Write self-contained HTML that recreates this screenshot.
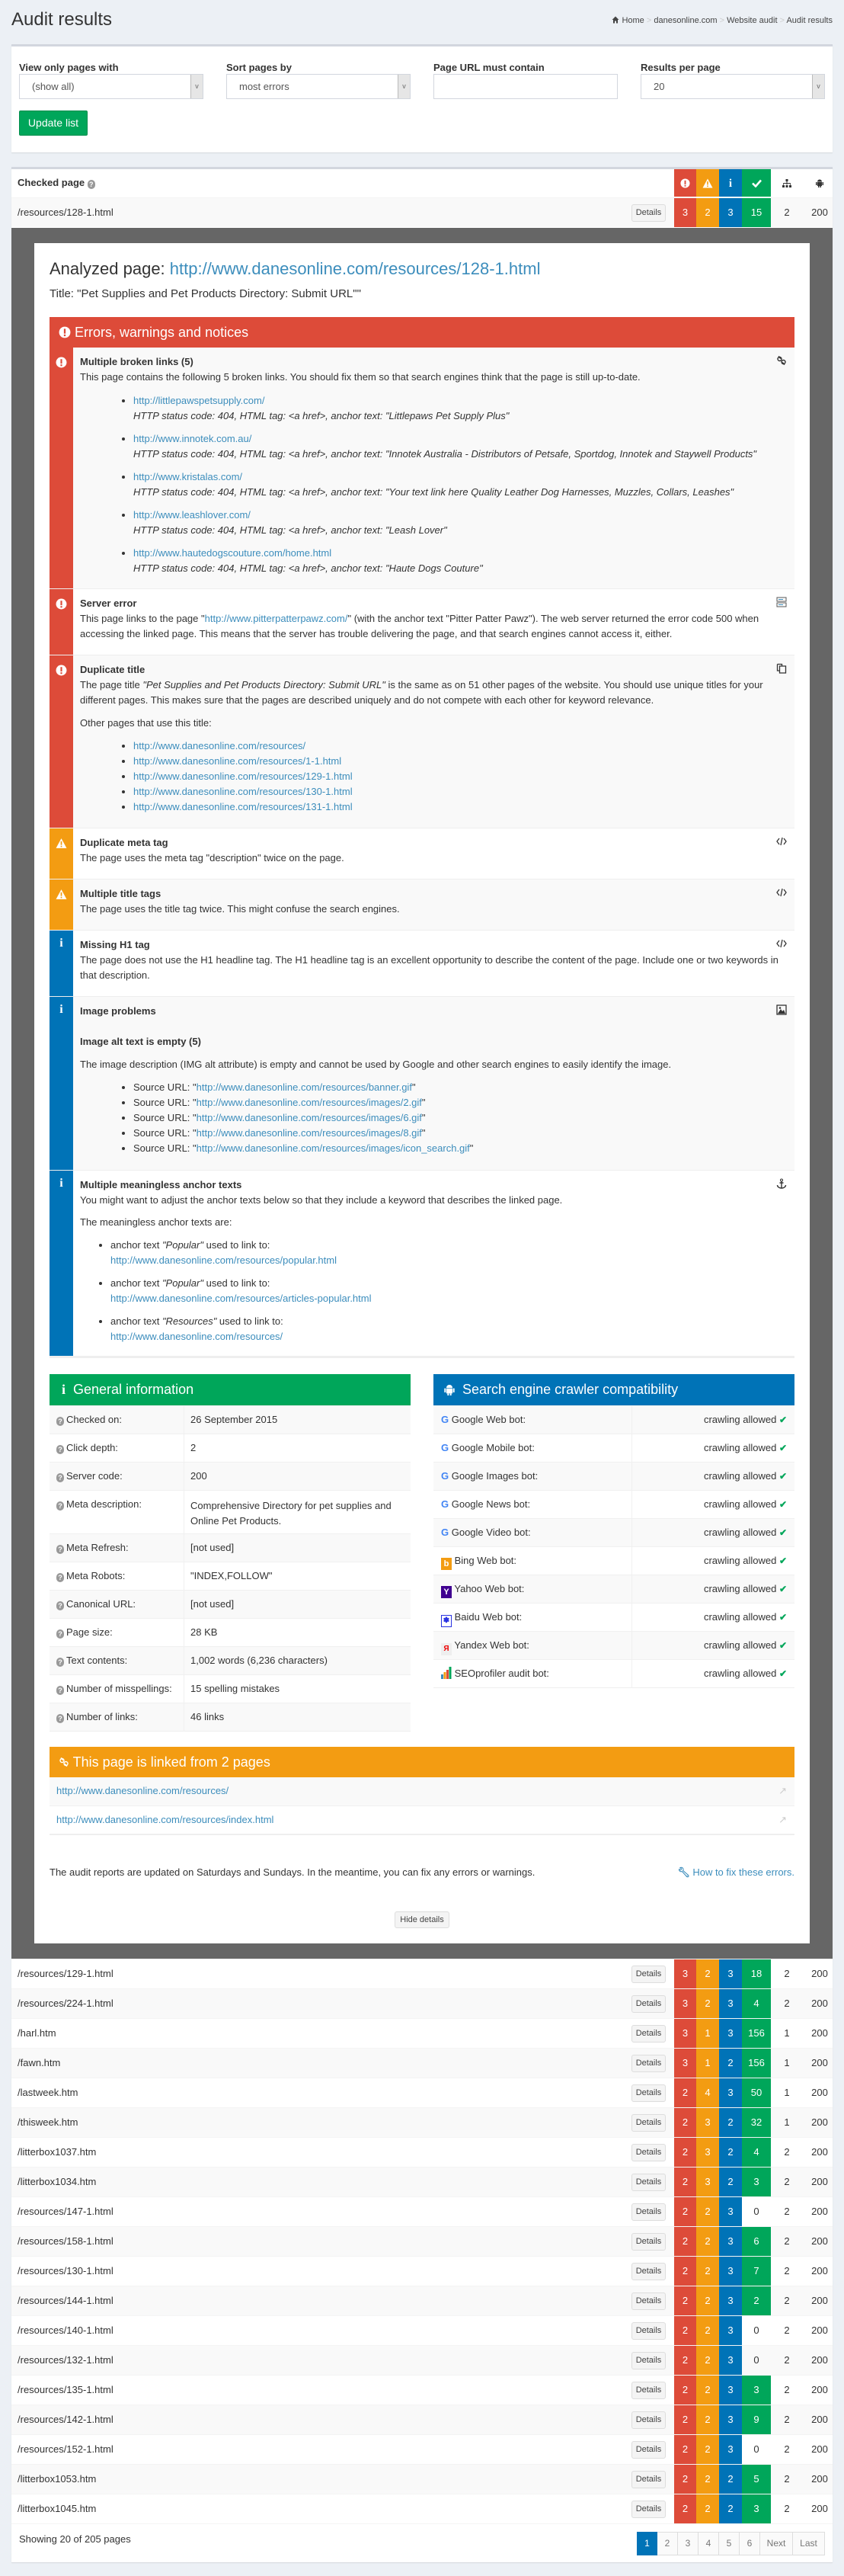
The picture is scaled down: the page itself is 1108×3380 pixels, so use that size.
<!DOCTYPE html>
<html><head><meta charset="utf-8">
<style>
*{box-sizing:border-box;margin:0;padding:0}
body{width:1108px;height:3380px;background:#ecf0f5;font-family:"Liberation Sans",sans-serif;font-size:13px;color:#333;position:relative;overflow:hidden}
a{color:#3c8dbc;text-decoration:none}
.abs{position:absolute}
.panel{position:absolute;left:15px;width:1078px;background:#fff;border-top:3px solid #d2d6de;box-shadow:0 1px 1px rgba(0,0,0,.1)}
.lbl{position:absolute;top:20px;font-weight:bold;font-size:13px}
.sel{position:absolute;top:36px;height:33px;width:242px;border:1px solid #d2d6de;background:#fff;padding:0 16px;line-height:31px;font-size:13px;color:#555}
.sel .ar{position:absolute;right:0;top:0;width:16px;height:31px;background:#e6e6e6;border-left:1px solid #bbb;font-size:9px;text-align:center;color:#666}
.btn{position:absolute;left:10px;top:84px;width:90px;height:33px;background:#00a65a;border:1px solid #008d4c;color:#fff;font-size:14px;line-height:31px;text-align:center;border-radius:2px}
.row{position:absolute;left:0;width:1078px;height:39px;border-top:1px solid #f4f4f4}
.row .p{position:absolute;left:8px;top:0;line-height:38px;font-size:13px}
.det{position:absolute;left:814px;top:8px;width:45px;height:23px;border:1px solid #ddd;background:#f4f4f4;border-radius:3px;font-size:11px;line-height:21px;text-align:center;color:#444}
.c{position:absolute;top:0;height:38px;line-height:38px;text-align:center;color:#fff;font-size:13px}
.c1{left:870px;width:29px;background:#dd4b39}
.c2{left:899px;width:30px;background:#f39c12}
.c3{left:929px;width:30px;background:#0073b7}
.c4{left:959px;width:38px;background:#00a65a}
.c4.z{background:transparent;color:#333}
.c5{left:1006px;width:24px;color:#333}
.c6{left:1046px;width:30px;color:#333}
.g{background:#f9f9f9}
.blk{position:relative;border-bottom:1px solid #eee;overflow:hidden}
.blk .st{position:absolute;left:0;top:0;bottom:0;width:31px}
.blk .ic{position:absolute;left:8px;top:12px;width:15px;height:15px}
.blk .ri{position:absolute;right:10px;top:10px;width:14px;height:14px}
.blk .ct{margin-left:40px;padding-top:9px;padding-right:14px;line-height:20px}
.blk h4{font-size:13px;font-weight:bold;line-height:20px}
.blk ul{list-style:disc;margin-left:70px}
.blk li{line-height:20px}
.blk li i{display:block}
.red{background:#dd4b39}.org{background:#f39c12}.blu{background:#0073b7}
.tb{position:absolute;border-bottom:1px solid #eee}
.tr{position:absolute;left:0;width:100%;height:37px;border-top:1px solid #f0f0f0;line-height:36px}
.q{display:inline-block;width:10px;height:12px;border-radius:5px;background:#999;color:#fff;font-size:9px;line-height:12px;text-align:center;font-weight:bold;vertical-align:-1px;margin-right:3px}
.pg{position:absolute;top:0;height:31px;border:1px solid #ddd;border-left:none;line-height:29px;text-align:center;color:#777;font-size:12px;background:#fafafa}
.ok{position:absolute;right:10px;line-height:37px;white-space:nowrap}
.ok span{color:#00a65a;font-weight:bold;font-size:12px}
</style></head><body>

<div class="abs" style="left:15px;top:12px;font-size:24px;color:#333">Audit results</div>
<div class="abs" style="right:15px;top:21px;font-size:11px;color:#444">
<svg width="10" height="10" viewBox="0 0 10 10" style="vertical-align:-1px"><path d="M5 0.5L0.5 5H2V9.5H4V6.5H6V9.5H8V5H9.5Z" fill="#444"/></svg>&nbsp;Home <span style="color:#ccc">&gt;</span> danesonline.com <span style="color:#ccc">&gt;</span> Website audit <span style="color:#ccc">&gt;</span> Audit results</div>

<div class="panel" style="top:58px;height:142px">
 <div class="lbl" style="left:10px">View only pages with</div>
 <div class="lbl" style="left:282px">Sort pages by</div>
 <div class="lbl" style="left:554px">Page URL must contain</div>
 <div class="lbl" style="left:826px">Results per page</div>
 <div class="sel" style="left:10px">(show all)<span class="ar">v</span></div>
 <div class="sel" style="left:282px">most errors<span class="ar">v</span></div>
 <div class="sel" style="left:554px"></div>
 <div class="sel" style="left:826px">20<span class="ar">v</span></div>
 <div class="btn">Update list</div>
</div>

<div class="panel" style="top:219px;height:3143px">
 <div class="abs" style="left:0;top:0;width:1078px;height:36px">
  <div class="abs" style="left:8px;top:0;line-height:36px;font-weight:bold">Checked page <span class="q">?</span></div>
  <div class="c c1" style="height:36px"><svg width="13" height="13" viewBox="0 0 14 14" style="vertical-align:-2px"><circle cx="7" cy="7" r="6.5" fill="#fff"/><rect x="6" y="3" width="2" height="5.5" fill="#dd4b39"/><rect x="6" y="9.5" width="2" height="2" fill="#dd4b39"/></svg></div>
  <div class="c c2" style="height:36px"><svg width="14" height="13" viewBox="0 0 14 13" style="vertical-align:-2px"><path d="M7 0.5L13.5 12.5H0.5Z" fill="#fff"/><rect x="6.2" y="4" width="1.6" height="4.5" fill="#f39c12"/><rect x="6.2" y="9.5" width="1.6" height="1.6" fill="#f39c12"/></svg></div>
  <div class="c c3" style="height:36px;font-weight:bold;font-family:'Liberation Serif',serif;font-size:15px">i</div>
  <div class="c c4" style="height:36px"><svg width="13" height="11" viewBox="0 0 13 11" style="vertical-align:-1px"><path d="M1 5.5L5 9.5L12 1.5" stroke="#fff" stroke-width="2.6" fill="none"/></svg></div>
  <div class="c c5" style="height:36px"><svg width="12" height="11" viewBox="0 0 12 11" style="vertical-align:-1px"><rect x="4.5" y="0" width="3" height="3" fill="#333"/><path d="M6 3V5M1.5 5.5V7.5M6 5.5V7.5M10.5 5.5V7.5M1.5 5.5H10.5" stroke="#333" stroke-width="1"/><rect x="0" y="8" width="3" height="3" fill="#333"/><rect x="4.5" y="8" width="3" height="3" fill="#333"/><rect x="9" y="8" width="3" height="3" fill="#333"/></svg></div>
  <div class="c c6" style="height:36px"><svg width="10" height="12" viewBox="0 0 10 12" style="vertical-align:-1px"><path d="M2 4.5A3 3 0 0 1 8 4.5Z" fill="#333"/><rect x="2" y="5" width="6" height="5" fill="#333"/><rect x="0" y="5" width="1.5" height="4" fill="#333"/><rect x="8.5" y="5" width="1.5" height="4" fill="#333"/><rect x="3" y="10" width="1.5" height="2" fill="#333"/><rect x="5.5" y="10" width="1.5" height="2" fill="#333"/></svg></div>
 </div>
 <div class="row g" style="top:37px"><div class="p">/resources/128-1.html</div><div class="det">Details</div><div class="c c1">3</div><div class="c c2">2</div><div class="c c3">3</div><div class="c c4">15</div><div class="c c5">2</div><div class="c c6">200</div></div>

 <div class="row" style="top:2348px"><div class="p">/resources/129-1.html</div><div class="det">Details</div><div class="c c1">3</div><div class="c c2">2</div><div class="c c3">3</div><div class="c c4">18</div><div class="c c5">2</div><div class="c c6">200</div></div>
 <div class="row g" style="top:2387px"><div class="p">/resources/224-1.html</div><div class="det">Details</div><div class="c c1">3</div><div class="c c2">2</div><div class="c c3">3</div><div class="c c4">4</div><div class="c c5">2</div><div class="c c6">200</div></div>
 <div class="row" style="top:2426px"><div class="p">/harl.htm</div><div class="det">Details</div><div class="c c1">3</div><div class="c c2">1</div><div class="c c3">3</div><div class="c c4">156</div><div class="c c5">1</div><div class="c c6">200</div></div>
 <div class="row g" style="top:2465px"><div class="p">/fawn.htm</div><div class="det">Details</div><div class="c c1">3</div><div class="c c2">1</div><div class="c c3">2</div><div class="c c4">156</div><div class="c c5">1</div><div class="c c6">200</div></div>
 <div class="row" style="top:2504px"><div class="p">/lastweek.htm</div><div class="det">Details</div><div class="c c1">2</div><div class="c c2">4</div><div class="c c3">3</div><div class="c c4">50</div><div class="c c5">1</div><div class="c c6">200</div></div>
 <div class="row g" style="top:2543px"><div class="p">/thisweek.htm</div><div class="det">Details</div><div class="c c1">2</div><div class="c c2">3</div><div class="c c3">2</div><div class="c c4">32</div><div class="c c5">1</div><div class="c c6">200</div></div>
 <div class="row" style="top:2582px"><div class="p">/litterbox1037.htm</div><div class="det">Details</div><div class="c c1">2</div><div class="c c2">3</div><div class="c c3">2</div><div class="c c4">4</div><div class="c c5">2</div><div class="c c6">200</div></div>
 <div class="row g" style="top:2621px"><div class="p">/litterbox1034.htm</div><div class="det">Details</div><div class="c c1">2</div><div class="c c2">3</div><div class="c c3">2</div><div class="c c4">3</div><div class="c c5">2</div><div class="c c6">200</div></div>
 <div class="row" style="top:2660px"><div class="p">/resources/147-1.html</div><div class="det">Details</div><div class="c c1">2</div><div class="c c2">2</div><div class="c c3">3</div><div class="c c4 z">0</div><div class="c c5">2</div><div class="c c6">200</div></div>
 <div class="row g" style="top:2699px"><div class="p">/resources/158-1.html</div><div class="det">Details</div><div class="c c1">2</div><div class="c c2">2</div><div class="c c3">3</div><div class="c c4">6</div><div class="c c5">2</div><div class="c c6">200</div></div>
 <div class="row" style="top:2738px"><div class="p">/resources/130-1.html</div><div class="det">Details</div><div class="c c1">2</div><div class="c c2">2</div><div class="c c3">3</div><div class="c c4">7</div><div class="c c5">2</div><div class="c c6">200</div></div>
 <div class="row g" style="top:2777px"><div class="p">/resources/144-1.html</div><div class="det">Details</div><div class="c c1">2</div><div class="c c2">2</div><div class="c c3">3</div><div class="c c4">2</div><div class="c c5">2</div><div class="c c6">200</div></div>
 <div class="row" style="top:2816px"><div class="p">/resources/140-1.html</div><div class="det">Details</div><div class="c c1">2</div><div class="c c2">2</div><div class="c c3">3</div><div class="c c4 z">0</div><div class="c c5">2</div><div class="c c6">200</div></div>
 <div class="row g" style="top:2855px"><div class="p">/resources/132-1.html</div><div class="det">Details</div><div class="c c1">2</div><div class="c c2">2</div><div class="c c3">3</div><div class="c c4 z">0</div><div class="c c5">2</div><div class="c c6">200</div></div>
 <div class="row" style="top:2894px"><div class="p">/resources/135-1.html</div><div class="det">Details</div><div class="c c1">2</div><div class="c c2">2</div><div class="c c3">3</div><div class="c c4">3</div><div class="c c5">2</div><div class="c c6">200</div></div>
 <div class="row g" style="top:2933px"><div class="p">/resources/142-1.html</div><div class="det">Details</div><div class="c c1">2</div><div class="c c2">2</div><div class="c c3">3</div><div class="c c4">9</div><div class="c c5">2</div><div class="c c6">200</div></div>
 <div class="row" style="top:2972px"><div class="p">/resources/152-1.html</div><div class="det">Details</div><div class="c c1">2</div><div class="c c2">2</div><div class="c c3">3</div><div class="c c4 z">0</div><div class="c c5">2</div><div class="c c6">200</div></div>
 <div class="row g" style="top:3011px"><div class="p">/litterbox1053.htm</div><div class="det">Details</div><div class="c c1">2</div><div class="c c2">2</div><div class="c c3">2</div><div class="c c4">5</div><div class="c c5">2</div><div class="c c6">200</div></div>
 <div class="row" style="top:3050px"><div class="p">/litterbox1045.htm</div><div class="det">Details</div><div class="c c1">2</div><div class="c c2">2</div><div class="c c3">2</div><div class="c c4">3</div><div class="c c5">2</div><div class="c c6">200</div></div>
 <div class="abs" style="left:0;top:3089px;width:1078px;border-top:1px solid #f4f4f4"></div>
 <div class="abs" style="left:10px;top:3102px;font-size:13px">Showing 20 of 205 pages</div>
 <div class="abs" style="left:821px;top:3100px;height:31px;width:247px">
  <div class="pg" style="left:0;width:27px;background:#0073b7;color:#fff;border:1px solid #0073b7">1</div>
  <div class="pg" style="left:27px;width:27px">2</div>
  <div class="pg" style="left:54px;width:27px">3</div>
  <div class="pg" style="left:81px;width:27px">4</div>
  <div class="pg" style="left:108px;width:27px">5</div>
  <div class="pg" style="left:135px;width:27px">6</div>
  <div class="pg" style="left:162px;width:43px">Next</div>
  <div class="pg" style="left:205px;width:42px">Last</div>
 </div>
</div>

<div class="abs" style="left:15px;top:299px;width:1078px;height:2271px;background:#666"></div>
<div class="abs" style="left:45px;top:319px;width:1018px;height:2231px;background:#fff"></div>

<div class="abs" style="left:65px;top:340px;font-size:22px;color:#333">Analyzed page: <a>http://www.danesonline.com/resources/128-1.html</a></div>
<div class="abs" style="left:65px;top:377px;font-size:15px;color:#333">Title: "Pet Supplies and Pet Products Directory: Submit URL""</div>

<div class="abs" style="left:65px;top:416px;width:978px">
 <div style="height:40px;background:#dd4b39;color:#fff;font-size:18px;line-height:40px;padding-left:12px"><svg width="16" height="16" viewBox="0 0 14 14" style="vertical-align:-2px"><circle cx="7" cy="7" r="6.5" fill="#fff"/><rect x="6" y="3" width="2" height="5.5" fill="#dd4b39"/><rect x="6" y="9.5" width="2" height="2" fill="#dd4b39"/></svg> Errors, warnings and notices</div>

 <div class="blk g" style="height:317px"><div class="st red"><svg class="ic" viewBox="0 0 14 14"><circle cx="7" cy="7" r="6.5" fill="#fff"/><rect x="6" y="3" width="2" height="5.5" fill="#dd4b39"/><rect x="6" y="9.5" width="2" height="2" fill="#dd4b39"/></svg></div>
  <svg class="ri" viewBox="0 0 14 14"><path d="M3 1.5L6 4.5M8 9.5L11 12.5" stroke="#333" stroke-width="1.6" fill="none"/><circle cx="4.5" cy="5" r="2.5" stroke="#333" fill="none" stroke-width="1.4"/><circle cx="9.5" cy="9" r="2.5" stroke="#333" fill="none" stroke-width="1.4"/></svg>
  <div class="ct"><h4>Multiple broken links (5)</h4>This page contains the following 5 broken links. You should fix them so that search engines think that the page is still up-to-date.
  <ul style="margin-top:11px">
   <li style="margin-bottom:10px"><a>http://littlepawspetsupply.com/</a><i>HTTP status code: 404, HTML tag: &lt;a href&gt;, anchor text: "Littlepaws Pet Supply Plus"</i></li>
   <li style="margin-bottom:10px"><a>http://www.innotek.com.au/</a><i>HTTP status code: 404, HTML tag: &lt;a href&gt;, anchor text: "Innotek Australia - Distributors of Petsafe, Sportdog, Innotek and Staywell Products"</i></li>
   <li style="margin-bottom:10px"><a>http://www.kristalas.com/</a><i>HTTP status code: 404, HTML tag: &lt;a href&gt;, anchor text: "Your text link here Quality Leather Dog Harnesses, Muzzles, Collars, Leashes"</i></li>
   <li style="margin-bottom:10px"><a>http://www.leashlover.com/</a><i>HTTP status code: 404, HTML tag: &lt;a href&gt;, anchor text: "Leash Lover"</i></li>
   <li><a>http://www.hautedogscouture.com/home.html</a><i>HTTP status code: 404, HTML tag: &lt;a href&gt;, anchor text: "Haute Dogs Couture"</i></li>
  </ul></div></div>

 <div class="blk" style="height:87px"><div class="st red"><svg class="ic" viewBox="0 0 14 14"><circle cx="7" cy="7" r="6.5" fill="#fff"/><rect x="6" y="3" width="2" height="5.5" fill="#dd4b39"/><rect x="6" y="9.5" width="2" height="2" fill="#dd4b39"/></svg></div>
  <svg class="ri" viewBox="0 0 14 14"><rect x="1" y="1" width="12" height="5" fill="none" stroke="#555"/><rect x="1" y="8" width="12" height="5" fill="none" stroke="#555"/><rect x="3" y="3" width="6" height="1" fill="#3c8dbc"/><rect x="3" y="10" width="6" height="1" fill="#3c8dbc"/></svg>
  <div class="ct"><h4>Server error</h4>This page links to the page "<a>http://www.pitterpatterpawz.com/</a>" (with the anchor text "Pitter Patter Pawz"). The web server returned the error code 500 when accessing the linked page. This means that the server has trouble delivering the page, and that search engines cannot access it, either.</div></div>

 <div class="blk g" style="height:227px"><div class="st red"><svg class="ic" viewBox="0 0 14 14"><circle cx="7" cy="7" r="6.5" fill="#fff"/><rect x="6" y="3" width="2" height="5.5" fill="#dd4b39"/><rect x="6" y="9.5" width="2" height="2" fill="#dd4b39"/></svg></div>
  <svg class="ri" viewBox="0 0 14 14"><path d="M1.5 1.5H7.5V4M4.5 4H12.5V13H4.5ZM1.5 1.5V10H4.5" stroke="#333" fill="none" stroke-width="1.3"/></svg>
  <div class="ct"><h4>Duplicate title</h4>The page title <i>"Pet Supplies and Pet Products Directory: Submit URL"</i> is the same as on 51 other pages of the website. You should use unique titles for your different pages. This makes sure that the pages are described uniquely and do not compete with each other for keyword relevance.
  <div style="margin-top:10px">Other pages that use this title:</div>
  <ul style="margin-top:10px">
   <li><a>http://www.danesonline.com/resources/</a></li>
   <li><a>http://www.danesonline.com/resources/1-1.html</a></li>
   <li><a>http://www.danesonline.com/resources/129-1.html</a></li>
   <li><a>http://www.danesonline.com/resources/130-1.html</a></li>
   <li><a>http://www.danesonline.com/resources/131-1.html</a></li>
  </ul></div></div>

 <div class="blk" style="height:67px"><div class="st org"><svg class="ic" viewBox="0 0 14 13"><path d="M7 0.5L13.5 12.5H0.5Z" fill="#fff"/><rect x="6.2" y="4" width="1.6" height="4.5" fill="#f39c12"/><rect x="6.2" y="9.5" width="1.6" height="1.6" fill="#f39c12"/></svg></div>
  <svg class="ri" viewBox="0 0 14 14"><path d="M4 3L1 7L4 11M10 3L13 7L10 11M8 2L6 12" stroke="#333" fill="none" stroke-width="1.3"/></svg>
  <div class="ct"><h4>Duplicate meta tag</h4>The page uses the meta tag "description" twice on the page.</div></div>

 <div class="blk g" style="height:67px"><div class="st org"><svg class="ic" viewBox="0 0 14 13"><path d="M7 0.5L13.5 12.5H0.5Z" fill="#fff"/><rect x="6.2" y="4" width="1.6" height="4.5" fill="#f39c12"/><rect x="6.2" y="9.5" width="1.6" height="1.6" fill="#f39c12"/></svg></div>
  <svg class="ri" viewBox="0 0 14 14"><path d="M4 3L1 7L4 11M10 3L13 7L10 11M8 2L6 12" stroke="#333" fill="none" stroke-width="1.3"/></svg>
  <div class="ct"><h4>Multiple title tags</h4>The page uses the title tag twice. This might confuse the search engines.</div></div>

 <div class="blk" style="height:87px"><div class="st blu"><div style="position:absolute;left:0;width:31px;top:8px;text-align:center;color:#fff;font-weight:bold;font-family:'Liberation Serif',serif;font-size:16px">i</div></div>
  <svg class="ri" viewBox="0 0 14 14"><path d="M4 3L1 7L4 11M10 3L13 7L10 11M8 2L6 12" stroke="#333" fill="none" stroke-width="1.3"/></svg>
  <div class="ct"><h4>Missing H1 tag</h4>The page does not use the H1 headline tag. The H1 headline tag is an excellent opportunity to describe the content of the page. Include one or two keywords in that description.</div></div>

 <div class="blk g" style="height:228px"><div class="st blu"><div style="position:absolute;left:0;width:31px;top:8px;text-align:center;color:#fff;font-weight:bold;font-family:'Liberation Serif',serif;font-size:16px">i</div></div>
  <svg class="ri" viewBox="0 0 14 14"><rect x="1" y="1" width="12" height="12" fill="none" stroke="#333" stroke-width="1.3"/><path d="M2 12L6 6L8 9L10 7L12 12Z" fill="#333"/><circle cx="5" cy="4.5" r="1.3" fill="#333"/></svg>
  <div class="ct"><h4>Image problems</h4><h4 style="margin-top:20px">Image alt text is empty (5)</h4>
  <div style="margin-top:10px">The image description (IMG alt attribute) is empty and cannot be used by Google and other search engines to easily identify the image.</div>
  <ul style="margin-top:10px">
   <li>Source URL: "<a>http://www.danesonline.com/resources/banner.gif</a>"</li>
   <li>Source URL: "<a>http://www.danesonline.com/resources/images/2.gif</a>"</li>
   <li>Source URL: "<a>http://www.danesonline.com/resources/images/6.gif</a>"</li>
   <li>Source URL: "<a>http://www.danesonline.com/resources/images/8.gif</a>"</li>
   <li>Source URL: "<a>http://www.danesonline.com/resources/images/icon_search.gif</a>"</li>
  </ul></div></div>

 <div class="blk" style="height:246px;border-bottom:3px solid #eee"><div class="st blu"><div style="position:absolute;left:0;width:31px;top:8px;text-align:center;color:#fff;font-weight:bold;font-family:'Liberation Serif',serif;font-size:16px">i</div></div>
  <svg class="ri" viewBox="0 0 14 14"><circle cx="7" cy="2.5" r="1.5" fill="none" stroke="#333"/><path d="M7 4V13M4.5 6H9.5M1.5 9A5.5 4 0 0 0 12.5 9" stroke="#333" fill="none" stroke-width="1.4"/></svg>
  <div class="ct"><h4>Multiple meaningless anchor texts</h4>You might want to adjust the anchor texts below so that they include a keyword that describes the linked page.
  <div style="margin-top:9px">The meaningless anchor texts are:</div>
  <ul style="margin-top:10px;margin-left:40px">
   <li style="margin-bottom:10px">anchor text <i style="display:inline">"Popular"</i> used to link to:<br><a>http://www.danesonline.com/resources/popular.html</a></li>
   <li style="margin-bottom:10px">anchor text <i style="display:inline">"Popular"</i> used to link to:<br><a>http://www.danesonline.com/resources/articles-popular.html</a></li>
   <li>anchor text <i style="display:inline">"Resources"</i> used to link to:<br><a>http://www.danesonline.com/resources/</a></li>
  </ul></div></div>
</div>

<div class="abs" style="left:65px;top:1803px;width:474px;height:41px;background:#00a65a;color:#fff;font-size:18px;line-height:41px;padding-left:16px"><b style="font-family:'Liberation Serif',serif">i</b>&nbsp; General information</div>
<div class="tb" style="left:65px;top:1844px;width:474px;height:428px">
 <div class="tr g" style="top:0"><span style="position:absolute;left:9px"><span class="q">?</span>Checked on:</span><span style="position:absolute;left:185px">26 September 2015</span></div>
 <div class="tr" style="top:37px"><span style="position:absolute;left:9px"><span class="q">?</span>Click depth:</span><span style="position:absolute;left:185px">2</span></div>
 <div class="tr g" style="top:74px"><span style="position:absolute;left:9px"><span class="q">?</span>Server code:</span><span style="position:absolute;left:185px">200</span></div>
 <div class="tr" style="top:111px;height:57px"><span style="position:absolute;left:9px"><span class="q">?</span>Meta description:</span><span style="position:absolute;left:185px;top:10px;line-height:20px;width:280px">Comprehensive Directory for pet supplies and Online Pet Products.</span></div>
 <div class="tr g" style="top:168px"><span style="position:absolute;left:9px"><span class="q">?</span>Meta Refresh:</span><span style="position:absolute;left:185px">[not used]</span></div>
 <div class="tr" style="top:205px"><span style="position:absolute;left:9px"><span class="q">?</span>Meta Robots:</span><span style="position:absolute;left:185px">"INDEX,FOLLOW"</span></div>
 <div class="tr g" style="top:242px"><span style="position:absolute;left:9px"><span class="q">?</span>Canonical URL:</span><span style="position:absolute;left:185px">[not used]</span></div>
 <div class="tr" style="top:279px"><span style="position:absolute;left:9px"><span class="q">?</span>Page size:</span><span style="position:absolute;left:185px">28 KB</span></div>
 <div class="tr g" style="top:316px"><span style="position:absolute;left:9px"><span class="q">?</span>Text contents:</span><span style="position:absolute;left:185px">1,002 words (6,236 characters)</span></div>
 <div class="tr" style="top:353px"><span style="position:absolute;left:9px"><span class="q">?</span>Number of misspellings:</span><span style="position:absolute;left:185px">15 spelling mistakes</span></div>
 <div class="tr g" style="top:390px"><span style="position:absolute;left:9px"><span class="q">?</span>Number of links:</span><span style="position:absolute;left:185px">46 links</span></div>
 <div class="abs" style="left:176px;top:0;width:1px;height:428px;background:#f0f0f0"></div>
</div>

<div class="abs" style="left:569px;top:1803px;width:474px;height:41px;background:#0073b7;color:#fff;font-size:18px;line-height:41px;padding-left:14px"><svg width="14" height="16" viewBox="0 0 10 12" style="vertical-align:-2px"><path d="M2 4.5A3 3 0 0 1 8 4.5Z" fill="#fff"/><rect x="2" y="5" width="6" height="5" fill="#fff"/><rect x="0" y="5" width="1.5" height="4" fill="#fff"/><rect x="8.5" y="5" width="1.5" height="4" fill="#fff"/><rect x="3" y="10" width="1.5" height="2" fill="#fff"/><rect x="5.5" y="10" width="1.5" height="2" fill="#fff"/></svg>&nbsp; Search engine crawler compatibility</div>
<div class="tb" style="left:569px;top:1844px;width:474px;height:371px">
 <div class="tr g" style="top:0"><span style="position:absolute;left:10px"><b style="color:#4285f4">G</b> Google Web bot:</span></div>
 <div class="tr" style="top:37px"><span style="position:absolute;left:10px"><b style="color:#4285f4">G</b> Google Mobile bot:</span></div>
 <div class="tr g" style="top:74px"><span style="position:absolute;left:10px"><b style="color:#4285f4">G</b> Google Images bot:</span></div>
 <div class="tr" style="top:111px"><span style="position:absolute;left:10px"><b style="color:#4285f4">G</b> Google News bot:</span></div>
 <div class="tr g" style="top:148px"><span style="position:absolute;left:10px"><b style="color:#4285f4">G</b> Google Video bot:</span></div>
 <div class="tr" style="top:185px"><span style="position:absolute;left:10px"><b style="display:inline-block;width:14px;height:16px;background:#f39c12;color:#fff;font-size:11px;line-height:16px;text-align:center;vertical-align:-3px">b</b> Bing Web bot:</span></div>
 <div class="tr g" style="top:222px"><span style="position:absolute;left:10px"><b style="display:inline-block;width:14px;height:16px;background:#400090;color:#fff;font-size:11px;line-height:16px;text-align:center;vertical-align:-3px">Y</b> Yahoo Web bot:</span></div>
 <div class="tr" style="top:259px"><span style="position:absolute;left:10px"><b style="display:inline-block;width:14px;height:16px;border:1px solid #2932e1;color:#2932e1;font-size:10px;line-height:14px;text-align:center;vertical-align:-3px">✽</b> Baidu Web bot:</span></div>
 <div class="tr g" style="top:296px"><span style="position:absolute;left:10px"><b style="display:inline-block;width:14px;height:16px;background:#eee;color:#e00;font-size:10px;line-height:16px;text-align:center;vertical-align:-3px">Я</b> Yandex Web bot:</span></div>
 <div class="tr" style="top:333px"><span style="position:absolute;left:10px"><svg width="14" height="16" viewBox="0 0 14 16" style="vertical-align:-3px"><rect x="0" y="10" width="3" height="6" fill="#3c8dbc"/><rect x="3.5" y="7" width="3" height="9" fill="#f39c12"/><rect x="7" y="4" width="3" height="12" fill="#dd4b39"/><rect x="10.5" y="0" width="3" height="16" fill="#00a65a"/></svg> SEOprofiler audit bot:</span></div>
 <div class="abs" style="left:260px;top:0;width:1px;height:371px;background:#f0f0f0"></div>
</div>
<div class="abs" style="left:569px;top:1844px;width:474px;font-size:13px">
 <div class="ok" style="top:0">crawling allowed <span>✔</span></div>
 <div class="ok" style="top:37px">crawling allowed <span>✔</span></div>
 <div class="ok" style="top:74px">crawling allowed <span>✔</span></div>
 <div class="ok" style="top:111px">crawling allowed <span>✔</span></div>
 <div class="ok" style="top:148px">crawling allowed <span>✔</span></div>
 <div class="ok" style="top:185px">crawling allowed <span>✔</span></div>
 <div class="ok" style="top:222px">crawling allowed <span>✔</span></div>
 <div class="ok" style="top:259px">crawling allowed <span>✔</span></div>
 <div class="ok" style="top:296px">crawling allowed <span>✔</span></div>
 <div class="ok" style="top:333px">crawling allowed <span>✔</span></div>
</div>

<div class="abs" style="left:65px;top:2292px;width:978px;height:40px;background:#f39c12;color:#fff;font-size:18px;line-height:40px;padding-left:12px"><svg width="14" height="16" viewBox="0 0 14 14" style="vertical-align:-2px"><path d="M3 1.5L6 4.5M8 9.5L11 12.5" stroke="#fff" stroke-width="1.6" fill="none"/><circle cx="4.5" cy="5" r="2.5" stroke="#fff" fill="none" stroke-width="1.4"/><circle cx="9.5" cy="9" r="2.5" stroke="#fff" fill="none" stroke-width="1.4"/></svg> This page is linked from 2 pages</div>
<div class="tb" style="left:65px;top:2332px;width:978px;height:76px;border-bottom:2px solid #eee">
 <div class="tr g" style="top:0;border:none"><a style="position:absolute;left:9px">http://www.danesonline.com/resources/</a><span style="position:absolute;right:10px;color:#ccc">↗</span></div>
 <div class="tr" style="top:37px"><a style="position:absolute;left:9px">http://www.danesonline.com/resources/index.html</a><span style="position:absolute;right:10px;color:#ccc">↗</span></div>
</div>

<div class="abs" style="left:65px;top:2449px;font-size:13px">The audit reports are updated on Saturdays and Sundays. In the meantime, you can fix any errors or warnings.</div>
<div class="abs" style="right:65px;top:2449px;font-size:13px"><a><span style="font-weight:bold">🔧︎</span> How to fix these errors.</a></div>
<div class="abs" style="left:518px;top:2508px;width:72px;height:22px;border:1px solid #ddd;background:#f4f4f4;border-radius:3px;font-size:11px;line-height:20px;text-align:center;color:#444">Hide details</div>

</body></html>
